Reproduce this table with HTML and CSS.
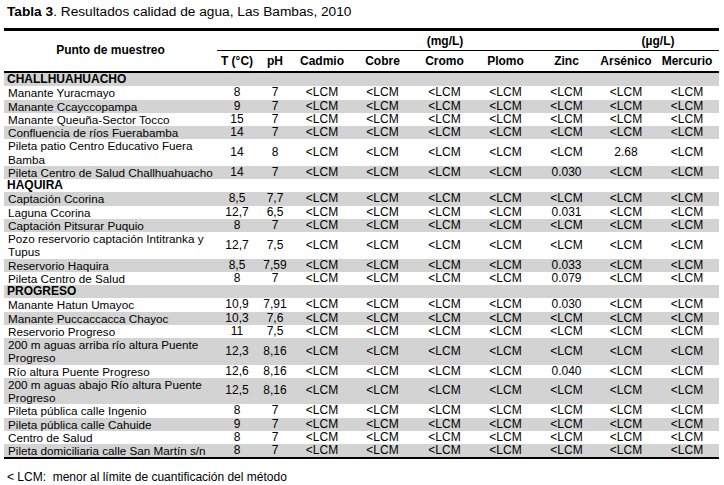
FILE: index.html
```html
<!DOCTYPE html>
<html lang="es">
<head>
<meta charset="utf-8">
<title>Tabla 3</title>
<link rel="stylesheet" href="styles.css">
</head>
<body>
<div class="page">
  <p class="caption"><b>Tabla 3</b>. Resultados calidad de agua, Las Bambas, 2010</p>
  <table class="data">
    <colgroup>
      <col class="c-name"><col class="c-t"><col class="c-ph"><col class="c-cd"><col class="c-cu"><col class="c-cr"><col class="c-pb"><col class="c-zn"><col class="c-as"><col class="c-hg">
    </colgroup>
    <thead>
      <tr class="h1">
        <th rowspan="2" class="h-name">Punto de muestreo</th>
        <th colspan="2" class="rule"></th>
        <th colspan="5" class="rule">(mg/L)</th>
        <th colspan="2" class="rule">(µg/L)</th>
      </tr>
      <tr class="h2">
        <th>T (°C)</th><th>pH</th><th>Cadmio</th><th>Cobre</th><th>Cromo</th><th>Plomo</th><th>Zinc</th><th>Arsénico</th><th>Mercurio</th>
      </tr>
    </thead>
    <tbody>
      <tr class="sec"><td colspan="10">CHALLHUAHUACHO</td></tr>
      <tr><td class="n">Manante Yuracmayo</td><td>8</td><td>7</td><td>&lt;LCM</td><td>&lt;LCM</td><td>&lt;LCM</td><td>&lt;LCM</td><td>&lt;LCM</td><td>&lt;LCM</td><td>&lt;LCM</td></tr>
      <tr><td class="n">Manante Ccayccopampa</td><td>9</td><td>7</td><td>&lt;LCM</td><td>&lt;LCM</td><td>&lt;LCM</td><td>&lt;LCM</td><td>&lt;LCM</td><td>&lt;LCM</td><td>&lt;LCM</td></tr>
      <tr><td class="n">Manante Queuña-Sector Tocco</td><td>15</td><td>7</td><td>&lt;LCM</td><td>&lt;LCM</td><td>&lt;LCM</td><td>&lt;LCM</td><td>&lt;LCM</td><td>&lt;LCM</td><td>&lt;LCM</td></tr>
      <tr><td class="n">Confluencia de ríos Fuerabamba</td><td>14</td><td>7</td><td>&lt;LCM</td><td>&lt;LCM</td><td>&lt;LCM</td><td>&lt;LCM</td><td>&lt;LCM</td><td>&lt;LCM</td><td>&lt;LCM</td></tr>
      <tr><td class="n">Pileta patio Centro Educativo Fuera<br>Bamba</td><td>14</td><td>8</td><td>&lt;LCM</td><td>&lt;LCM</td><td>&lt;LCM</td><td>&lt;LCM</td><td>&lt;LCM</td><td>2.68</td><td>&lt;LCM</td></tr>
      <tr><td class="n">Pileta Centro de Salud Challhuahuacho</td><td>14</td><td>7</td><td>&lt;LCM</td><td>&lt;LCM</td><td>&lt;LCM</td><td>&lt;LCM</td><td>0.030</td><td>&lt;LCM</td><td>&lt;LCM</td></tr>
      <tr class="sec"><td colspan="10">HAQUIRA</td></tr>
      <tr><td class="n">Captación Ccorina</td><td>8,5</td><td>7,7</td><td>&lt;LCM</td><td>&lt;LCM</td><td>&lt;LCM</td><td>&lt;LCM</td><td>&lt;LCM</td><td>&lt;LCM</td><td>&lt;LCM</td></tr>
      <tr><td class="n">Laguna Ccorina</td><td>12,7</td><td>6,5</td><td>&lt;LCM</td><td>&lt;LCM</td><td>&lt;LCM</td><td>&lt;LCM</td><td>0.031</td><td>&lt;LCM</td><td>&lt;LCM</td></tr>
      <tr><td class="n">Captación Pitsurar Puquio</td><td>8</td><td>7</td><td>&lt;LCM</td><td>&lt;LCM</td><td>&lt;LCM</td><td>&lt;LCM</td><td>&lt;LCM</td><td>&lt;LCM</td><td>&lt;LCM</td></tr>
      <tr><td class="n">Pozo reservorio captación Intitranka y<br>Tupus</td><td>12,7</td><td>7,5</td><td>&lt;LCM</td><td>&lt;LCM</td><td>&lt;LCM</td><td>&lt;LCM</td><td>&lt;LCM</td><td>&lt;LCM</td><td>&lt;LCM</td></tr>
      <tr><td class="n">Reservorio Haquira</td><td>8,5</td><td>7,59</td><td>&lt;LCM</td><td>&lt;LCM</td><td>&lt;LCM</td><td>&lt;LCM</td><td>0.033</td><td>&lt;LCM</td><td>&lt;LCM</td></tr>
      <tr><td class="n">Pileta Centro de Salud</td><td>8</td><td>7</td><td>&lt;LCM</td><td>&lt;LCM</td><td>&lt;LCM</td><td>&lt;LCM</td><td>0.079</td><td>&lt;LCM</td><td>&lt;LCM</td></tr>
      <tr class="sec"><td colspan="10">PROGRESO</td></tr>
      <tr><td class="n">Manante Hatun Umayoc</td><td>10,9</td><td>7,91</td><td>&lt;LCM</td><td>&lt;LCM</td><td>&lt;LCM</td><td>&lt;LCM</td><td>0.030</td><td>&lt;LCM</td><td>&lt;LCM</td></tr>
      <tr><td class="n">Manante Puccaccacca Chayoc</td><td>10,3</td><td>7,6</td><td>&lt;LCM</td><td>&lt;LCM</td><td>&lt;LCM</td><td>&lt;LCM</td><td>&lt;LCM</td><td>&lt;LCM</td><td>&lt;LCM</td></tr>
      <tr><td class="n">Reservorio Progreso</td><td>11</td><td>7,5</td><td>&lt;LCM</td><td>&lt;LCM</td><td>&lt;LCM</td><td>&lt;LCM</td><td>&lt;LCM</td><td>&lt;LCM</td><td>&lt;LCM</td></tr>
      <tr><td class="n">200 m aguas arriba río altura Puente<br>Progreso</td><td>12,3</td><td>8,16</td><td>&lt;LCM</td><td>&lt;LCM</td><td>&lt;LCM</td><td>&lt;LCM</td><td>&lt;LCM</td><td>&lt;LCM</td><td>&lt;LCM</td></tr>
      <tr><td class="n">Río altura Puente Progreso</td><td>12,6</td><td>8,16</td><td>&lt;LCM</td><td>&lt;LCM</td><td>&lt;LCM</td><td>&lt;LCM</td><td>0.040</td><td>&lt;LCM</td><td>&lt;LCM</td></tr>
      <tr><td class="n">200 m aguas abajo Río altura Puente<br>Progreso</td><td>12,5</td><td>8,16</td><td>&lt;LCM</td><td>&lt;LCM</td><td>&lt;LCM</td><td>&lt;LCM</td><td>&lt;LCM</td><td>&lt;LCM</td><td>&lt;LCM</td></tr>
      <tr><td class="n">Pileta pública calle Ingenio</td><td>8</td><td>7</td><td>&lt;LCM</td><td>&lt;LCM</td><td>&lt;LCM</td><td>&lt;LCM</td><td>&lt;LCM</td><td>&lt;LCM</td><td>&lt;LCM</td></tr>
      <tr><td class="n">Pileta pública calle Cahuide</td><td>9</td><td>7</td><td>&lt;LCM</td><td>&lt;LCM</td><td>&lt;LCM</td><td>&lt;LCM</td><td>&lt;LCM</td><td>&lt;LCM</td><td>&lt;LCM</td></tr>
      <tr><td class="n">Centro de Salud</td><td>8</td><td>7</td><td>&lt;LCM</td><td>&lt;LCM</td><td>&lt;LCM</td><td>&lt;LCM</td><td>&lt;LCM</td><td>&lt;LCM</td><td>&lt;LCM</td></tr>
      <tr><td class="n">Pileta domiciliaria calle San Martín s/n</td><td>8</td><td>7</td><td>&lt;LCM</td><td>&lt;LCM</td><td>&lt;LCM</td><td>&lt;LCM</td><td>&lt;LCM</td><td>&lt;LCM</td><td>&lt;LCM</td></tr>
    </tbody>
  </table>
  <p class="note">&lt; LCM:&nbsp; menor al límite de cuantificación del método</p>
</div>
</body>
</html>
```
FILE: styles.css
```css
html, body {
  margin: 0;
  padding: 0;
  background: #ffffff;
}
body {
  font-family: "Liberation Sans", Arial, sans-serif;
  color: #000;
}
.page {
  padding: 4px 5px 0 4px;
}
.caption {
  margin: 0 0 0 3px;
  font-size: 13.7px;
  line-height: 16px;
}
.data {
  margin-top: 8px;
  border-collapse: collapse;
  table-layout: fixed;
  width: 715px;
  font-size: 12px;
}
.c-name { width: 213px; }
.c-t { width: 40px; }
.c-ph { width: 36px; }
.c-cd { width: 58px; }
.c-cu { width: 63px; }
.c-cr { width: 61px; }
.c-pb { width: 61px; }
.c-zn { width: 61px; }
.c-as { width: 58px; }
.c-hg { width: 64px; }

.data th {
  font-weight: bold;
  padding: 0;
  text-align: center;
  vertical-align: middle;
}
.h1 th {
  border-top: 3px solid #000;
  height: 19px;
}
.h1 th.rule {
  border-bottom: 1px solid #000;
}
.h1 th.h-name {
  border-bottom: 2px solid #000;
  padding-bottom: 3px;
}
.h2 th {
  height: 20px;
  border-bottom: 2px solid #000;
}
.data td {
  padding: 0;
  line-height: 13.25px;
  text-align: center;
  vertical-align: middle;
  white-space: nowrap;
}
.data td.n {
  text-align: left;
  padding-left: 4px;
  font-size: 11.7px;
}
.data tbody tr:nth-child(odd) {
  background: #d3d3d3;
}
.data tr.sec td {
  text-align: left;
  font-weight: bold;
  padding-left: 3px;
}
.data tbody tr:last-child td {
  border-bottom: 2px solid #000;
}
.note {
  margin: 11px 0 0 3px;
  font-size: 12px;
  line-height: 14px;
}
```
